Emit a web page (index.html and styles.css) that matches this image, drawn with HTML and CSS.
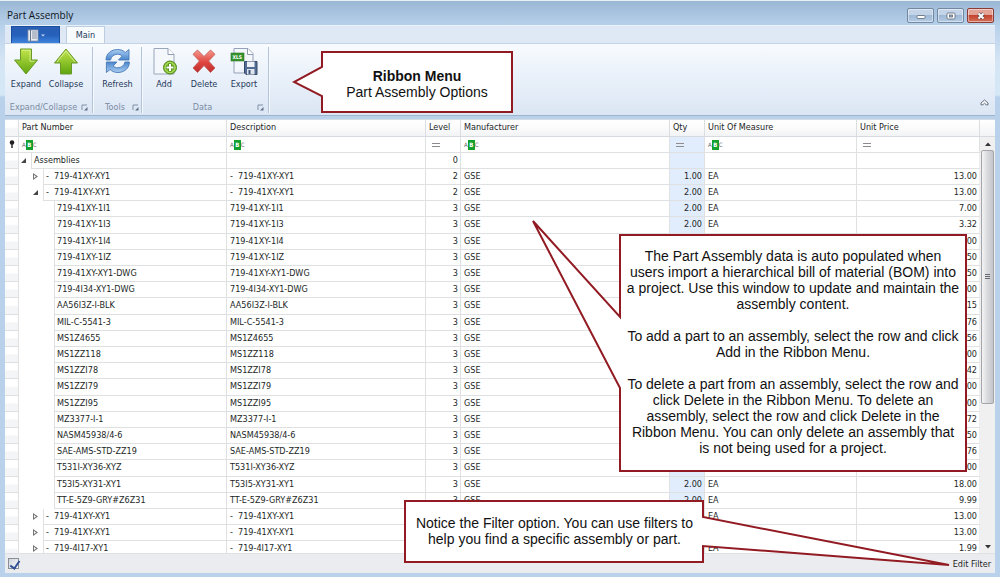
FILE: index.html
```html
<!DOCTYPE html>
<html lang="en">
<head>
<meta charset="utf-8">
<title>Part Assembly</title>
<link rel="stylesheet" href="styles.css">
</head>
<body>
<div class="window">
  <header class="titlebar">
    <h1 class="title">Part Assembly</h1>
    <div class="win-controls">
      <button class="win-btn" aria-label="Minimize"><svg width="10" height="8" viewBox="0 0 10 8"><rect x="1" y="3.5" width="8" height="3" rx="1" fill="#fff" stroke="#5b6675" stroke-width=".8"/></svg></button>
      <button class="win-btn" aria-label="Maximize"><svg width="10" height="8" viewBox="0 0 10 8"><rect x="1" y="1" width="8" height="6" rx="1" fill="#fff" stroke="#5b6675" stroke-width=".8"/><rect x="3.5" y="3" width="3" height="2" fill="#9cb2cc" stroke="#5b6675" stroke-width=".8"/></svg></button>
      <button class="win-btn close" aria-label="Close"><svg width="10" height="8" viewBox="0 0 10 8"><path d="M2.5 1.5l5 5M7.5 1.5l-5 5" stroke="#5c4a50" stroke-width="3.2"/><path d="M2.5 1.5l5 5M7.5 1.5l-5 5" stroke="#fff" stroke-width="2"/></svg></button>
    </div>
  </header>

  <nav class="tabs">
    <button class="app-menu" aria-label="Application menu">
      <svg width="18" height="13" viewBox="0 0 18 13"><rect x="1" y="1" width="10" height="11" fill="#e9edf2" stroke="#8593a8" stroke-width=".8"/><path d="M3.5 1v11" stroke="#66758c" stroke-width="1"/><path d="M5 3h5M5 5h5M5 7h5M5 9h5" stroke="#77849a" stroke-width=".9"/><path d="M14 5.5h4l-2 2z" fill="#c6d8f2"/></svg>
    </button>
    <button class="tab">Main</button>
  </nav>

  <section class="ribbon">
    <div class="group">
      <div class="tools">
        <button class="tool"><svg width="26" height="28" viewBox="0 0 26 28"><defs><linearGradient id="gr" x1="0" y1="0" x2="0" y2="1"><stop offset="0" stop-color="#c3e54b"/><stop offset="1" stop-color="#5fa50f"/></linearGradient></defs><path d="M7.500 2h11v11h6L13 27 1.500 13h6z" fill="url(#gr)" stroke="#68992a" stroke-linejoin="round"/><path d="M9 3.300h8v11h4.500" fill="none" stroke="#dcf29a" stroke-width=".8"/></svg>Expand</button>
        <button class="tool"><svg width="26" height="28" viewBox="0 0 26 28"><path d="M7.500 27h11V16h6L13 2 1.500 16h6z" fill="url(#gr)" stroke="#68992a" stroke-linejoin="round"/><path d="M4 15L13 4l9 11" fill="none" stroke="#e3f5a8" stroke-width=".8"/></svg>Collapse</button>
      </div>
      <div class="caption"><span>Expand/Collapse</span><svg class="launch" width="7" height="7" viewBox="0 0 7 7"><path d="M1 6V1h5" fill="none" stroke="#7f90a8"/><path d="M6.500 3v3.500H3z" fill="#60708a"/></svg></div>
    </div>
    <div class="group">
      <div class="tools">
        <button class="tool"><svg width="28" height="28" viewBox="0 0 28 28"><defs><linearGradient id="bl" x1="0" y1="0" x2="0" y2="1"><stop offset="0" stop-color="#a9cdf2"/><stop offset="1" stop-color="#4a86cc"/></linearGradient></defs><path id="arc" d="M2 13C2 6.500 7.500 2.500 13.500 2.500c3.500 0 6 1.200 7.800 3L25 2.500V13H14.500l3.700-4c-1.200-1.100-2.800-1.800-4.700-1.800C10 7.200 7 9.500 6.500 13z" fill="url(#bl)" stroke="#4679b5" stroke-width=".9" stroke-linejoin="round"/><use href="#arc" transform="rotate(180 13.700 14)"/></svg>Refresh</button>
      </div>
      <div class="caption"><span>Tools</span><svg class="launch" width="7" height="7" viewBox="0 0 7 7"><path d="M1 6V1h5" fill="none" stroke="#7f90a8"/><path d="M6.500 3v3.500H3z" fill="#60708a"/></svg></div>
    </div>
    <div class="group">
      <div class="tools">
        <button class="tool"><svg width="28" height="28" viewBox="0 0 28 28"><path d="M4 1.500h14l6 6V27H4z" fill="#f4f7fc" stroke="#9aa6ba"/><path d="M18 1.500v6h6" fill="#fff" stroke="#8e9ab0"/><circle cx="20" cy="20.500" r="6.500" fill="#84c32c" stroke="#4d8518"/><circle cx="20" cy="20.500" r="5" fill="none" stroke="#c8e78f" stroke-width=".7"/><path d="M20 16.500v8M16 20.500h8" stroke="#4d8518" stroke-width="3.400"/><path d="M20 17v7M16.500 20.500h7" stroke="#fff" stroke-width="2"/></svg>Add</button>
        <button class="tool"><svg width="26" height="28" viewBox="0 0 26 28"><defs><linearGradient id="rd" x1="0" y1="0" x2="0" y2="1"><stop offset="0" stop-color="#f59a8d"/><stop offset=".55" stop-color="#df4540"/><stop offset="1" stop-color="#bd2d2e"/></linearGradient></defs><path d="M6.500 3L13 9.500 19.500 3 24 7.300 17.600 14 24 21l-4.500 4.500L13 18.600 6.500 25.500 2 21l6.400-7L2 7.300z" fill="url(#rd)" stroke="#c2605c" stroke-width=".9" stroke-linejoin="round"/></svg>Delete</button>
        <button class="tool"><svg width="28" height="28" viewBox="0 0 28 28"><path d="M4 26V1.500h14l5 5V15" fill="#f4f7fc" stroke="#95a1b6"/><path d="M4 26h10" stroke="#95a1b6"/><path d="M17.500 1.500v6H23" fill="#fff" stroke="#8e9ab0"/><rect x="1" y="6" width="13" height="8" fill="#37922f" stroke="#2b7a26" stroke-width=".6"/><text x="2.500" y="12.300" class="xls">XLS</text><path d="M14.500 14.500h12.500v13H16l-1.500-1.500z" fill="#526c93" stroke="#374a69"/><rect x="17" y="14.500" width="7.500" height="5.500" fill="#eef2f8"/><rect x="17" y="22" width="7.500" height="5.500" fill="#dfe5ee"/><rect x="18.500" y="23" width="2" height="4" fill="#3f557a"/></svg>Export</button>
      </div>
      <div class="caption"><span>Data</span><svg class="launch" width="7" height="7" viewBox="0 0 7 7"><path d="M1 6V1h5" fill="none" stroke="#7f90a8"/><path d="M6.500 3v3.500H3z" fill="#60708a"/></svg></div>
    </div>
    <button class="fold" aria-label="Collapse ribbon"><svg width="9" height="7" viewBox="0 0 9 7"><path d="M1 4l3.500-3L8 4v1.800H6.200L4.500 4.200 2.800 5.800H1z" fill="#fff" stroke="#4f5d72" stroke-width=".9"/></svg></button>
  </section>

  <main class="grid">
    <div class="grid-view">
      <table class="parts">
        <colgroup><col class="c-mark"><col class="c-part"><col class="c-desc"><col class="c-level"><col><col class="c-qty"><col class="c-uom"><col class="c-price"></colgroup>
        <thead>
          <tr><th></th><th>Part Number</th><th>Description</th><th>Level</th><th>Manufacturer</th><th>Qty</th><th>Unit Of Measure</th><th>Unit Price</th></tr>
          <tr class="filters"><td class="mark"><svg width="6" height="9" viewBox="0 0 6 9"><circle cx="3" cy="2.500" r="2.300" fill="#222"/><path d="M3 4v4" stroke="#222" stroke-width="1.400"/></svg></td><td><span class="abc">A<b>B</b>C</span></td><td><span class="abc">A<b>B</b>C</span></td><td><i class="eq"></i></td><td><span class="abc">A<b>B</b>C</span></td><td class="qty"><i class="eq"></i></td><td><span class="abc">A<b>B</b>C</span></td><td><i class="eq"></i></td></tr>
        </thead>
        <tbody>
          <tr class="l0 open"><td></td><td><div class="tree"><i></i><span>Assemblies</span></div></td><td></td><td>0</td><td></td><td></td><td></td><td></td></tr>
          <tr class="l1"><td></td><td><div class="tree"><i></i><span>-&nbsp; 719-41XY-XY1</span></div></td><td>-&nbsp; 719-41XY-XY1</td><td>2</td><td>GSE</td><td>1.00</td><td>EA</td><td>13.00</td></tr>
          <tr class="l1 open"><td></td><td><div class="tree"><i></i><span>-&nbsp; 719-41XY-XY1</span></div></td><td>-&nbsp; 719-41XY-XY1</td><td>2</td><td>GSE</td><td>2.00</td><td>EA</td><td>13.00</td></tr>
          <tr class="l2"><td></td><td><div class="tree"><i></i><span>719-41XY-1I1</span></div></td><td>719-41XY-1I1</td><td>3</td><td>GSE</td><td>2.00</td><td>EA</td><td>7.00</td></tr>
          <tr class="l2"><td></td><td><div class="tree"><i></i><span>719-41XY-1I3</span></div></td><td>719-41XY-1I3</td><td>3</td><td>GSE</td><td>2.00</td><td>EA</td><td>3.32</td></tr>
          <tr class="l2"><td></td><td><div class="tree"><i></i><span>719-41XY-1I4</span></div></td><td>719-41XY-1I4</td><td>3</td><td>GSE</td><td></td><td></td><td>00</td></tr>
          <tr class="l2"><td></td><td><div class="tree"><i></i><span>719-41XY-1IZ</span></div></td><td>719-41XY-1IZ</td><td>3</td><td>GSE</td><td></td><td></td><td>50</td></tr>
          <tr class="l2"><td></td><td><div class="tree"><i></i><span>719-41XY-XY1-DWG</span></div></td><td>719-41XY-XY1-DWG</td><td>3</td><td>GSE</td><td></td><td></td><td>50</td></tr>
          <tr class="l2"><td></td><td><div class="tree"><i></i><span>719-4I34-XY1-DWG</span></div></td><td>719-4I34-XY1-DWG</td><td>3</td><td>GSE</td><td></td><td></td><td>00</td></tr>
          <tr class="l2"><td></td><td><div class="tree"><i></i><span>AA56I3Z-I-BLK</span></div></td><td>AA56I3Z-I-BLK</td><td>3</td><td>GSE</td><td></td><td></td><td>15</td></tr>
          <tr class="l2"><td></td><td><div class="tree"><i></i><span>MIL-C-5541-3</span></div></td><td>MIL-C-5541-3</td><td>3</td><td>GSE</td><td></td><td></td><td>76</td></tr>
          <tr class="l2"><td></td><td><div class="tree"><i></i><span>MS1Z4655</span></div></td><td>MS1Z4655</td><td>3</td><td>GSE</td><td></td><td></td><td>56</td></tr>
          <tr class="l2"><td></td><td><div class="tree"><i></i><span>MS1ZZ118</span></div></td><td>MS1ZZ118</td><td>3</td><td>GSE</td><td></td><td></td><td>00</td></tr>
          <tr class="l2"><td></td><td><div class="tree"><i></i><span>MS1ZZI78</span></div></td><td>MS1ZZI78</td><td>3</td><td>GSE</td><td></td><td></td><td>42</td></tr>
          <tr class="l2"><td></td><td><div class="tree"><i></i><span>MS1ZZI79</span></div></td><td>MS1ZZI79</td><td>3</td><td>GSE</td><td></td><td></td><td>00</td></tr>
          <tr class="l2"><td></td><td><div class="tree"><i></i><span>MS1ZZI95</span></div></td><td>MS1ZZI95</td><td>3</td><td>GSE</td><td></td><td></td><td>00</td></tr>
          <tr class="l2"><td></td><td><div class="tree"><i></i><span>MZ3377-I-1</span></div></td><td>MZ3377-I-1</td><td>3</td><td>GSE</td><td></td><td></td><td>72</td></tr>
          <tr class="l2"><td></td><td><div class="tree"><i></i><span>NASM45938/4-6</span></div></td><td>NASM45938/4-6</td><td>3</td><td>GSE</td><td></td><td></td><td>50</td></tr>
          <tr class="l2"><td></td><td><div class="tree"><i></i><span>SAE-AMS-STD-ZZ19</span></div></td><td>SAE-AMS-STD-ZZ19</td><td>3</td><td>GSE</td><td></td><td></td><td>76</td></tr>
          <tr class="l2"><td></td><td><div class="tree"><i></i><span>T531I-XY36-XYZ</span></div></td><td>T531I-XY36-XYZ</td><td>3</td><td>GSE</td><td></td><td></td><td>00</td></tr>
          <tr class="l2"><td></td><td><div class="tree"><i></i><span>T53I5-XY31-XY1</span></div></td><td>T53I5-XY31-XY1</td><td>3</td><td>GSE</td><td>2.00</td><td>EA</td><td>18.00</td></tr>
          <tr class="l2"><td></td><td><div class="tree"><i></i><span>TT-E-5Z9-GRY#Z6Z31</span></div></td><td>TT-E-5Z9-GRY#Z6Z31</td><td>3</td><td>GSE</td><td>2.00</td><td>EA</td><td>9.99</td></tr>
          <tr class="l1"><td></td><td><div class="tree"><i></i><span>-&nbsp; 719-41XY-XY1</span></div></td><td>-&nbsp; 719-41XY-XY1</td><td></td><td></td><td></td><td>EA</td><td>13.00</td></tr>
          <tr class="l1"><td></td><td><div class="tree"><i></i><span>-&nbsp; 719-41XY-XY1</span></div></td><td>-&nbsp; 719-41XY-XY1</td><td></td><td></td><td></td><td></td><td>13.00</td></tr>
          <tr class="l1"><td></td><td><div class="tree"><i></i><span>-&nbsp; 719-4I17-XY1</span></div></td><td>-&nbsp; 719-4I17-XY1</td><td></td><td></td><td></td><td>EA</td><td>1.99</td></tr>
        </tbody>
      </table>
    </div>
    <div class="scroll">
      <div class="scroll-head"></div>
      <button class="arrow" aria-label="Scroll up"><svg width="6" height="4" viewBox="0 0 6 4"><path d="M0 4l3-3.500L6 4z" fill="#333"/></svg></button>
      <div class="track"><div class="thumb"><i></i><i></i><i></i></div></div>
      <button class="arrow" aria-label="Scroll down"><svg width="6" height="4" viewBox="0 0 6 4"><path d="M0 0l3 3.500L6 0z" fill="#333"/></svg></button>
    </div>
  </main>

  <footer class="filterbar">
    <input class="check" type="checkbox" checked aria-label="Enable filter">
    <button class="edit">Edit Filter</button>
  </footer>

  <aside class="callout ribbon-note">
    <svg width="221" height="62" viewBox="0 0 221 62"><path d="M30 1H220V61H30V45L2 31 30 16z"/></svg>
    <p><strong>Ribbon Menu</strong><br>Part Assembly Options</p>
  </aside>
  <aside class="callout data-note">
    <svg width="436" height="254" viewBox="0 0 436 254"><path d="M89 17H435V253H89V170L2 3 89 99z"/></svg>
    <div class="note-text">
      <p>The Part Assembly data is auto populated when<br>users import a hierarchical bill of material (BOM) into<br>a project. Use this window to update and maintain the<br>assembly content.</p>
      <p>To add a part to an assembly, select the row and click<br>Add in the Ribbon Menu.</p>
      <p>To delete a part from an assembly, select the row and<br>click Delete in the Ribbon Menu. To delete an<br>assembly, select the row and click Delete in the<br>Ribbon Menu. You can only delete an assembly that<br>is not being used for a project.</p>
    </div>
  </aside>
  <aside class="callout filter-note">
    <svg width="548" height="68" viewBox="0 0 548 68"><path d="M1 1H299V17L545 65 299 46V62H1z"/></svg>
    <p>Notice the Filter option. You can use filters to<br>help you find a specific assembly or part.</p>
  </aside>
</div>
</body>
</html>
```

FILE: styles.css
```css
* { box-sizing: border-box; }

body {
  margin: 0;
  font: 9px/12px "DejaVu Sans Condensed", "Noto Sans", sans-serif;
  color: #1c1f26;
}

button {
  padding: 0;
  border: 0;
  background: none;
  font: inherit;
  color: inherit;
}

/* Window frame */
.window {
  position: relative;
  display: flex;
  flex-direction: column;
  height: 100vh;
  padding: 0 5px 4px;
  overflow: hidden;
  border-top: 1px solid #e8eef4;
  background: linear-gradient(#9ab7d4 0, #b7d0ea 24px, #d5e5f5 60px, #d5e8f6 94px, #b9d1ea 96px);
}

.titlebar {
  display: flex;
  justify-content: space-between;
  height: 24px;
  padding: 7px 1px 0 2px;
  flex: none;
}

.title {
  margin: 0;
  font: 10px/14px "Open Sans", "Noto Sans", sans-serif;
  color: #10151c;
}

.win-controls { display: flex; gap: 3px; }

.win-btn {
  display: flex;
  align-items: center;
  justify-content: center;
  width: 27px;
  height: 15px;
  border: 1px solid #7288a3;
  border-radius: 2px;
  background: linear-gradient(#c3d4e8 45%, #9fb8d4 50%, #b3cbe5);
  box-shadow: inset 0 0 0 1px rgba(255, 255, 255, .45);
}

.win-btn.close {
  border-color: #8c3b37;
  background: linear-gradient(#e3a397 45%, #c4432e 50%, #d3715a);
}

/* Ribbon */
.tabs {
  display: flex;
  gap: 6px;
  height: 18px;
  padding-left: 6px;
  flex: none;
  background: #dfe9f5;
  border-top: 1px solid #e9f1f9;
}

.app-menu {
  display: flex;
  align-items: center;
  justify-content: center;
  width: 49px;
  border: 1px solid #1c4f9f;
  border-bottom: 0;
  background: linear-gradient(#2a5fb4, #2560bb 50%, #3f83dc);
}

.tab {
  width: 39px;
  border: 1px solid #bccde0;
  border-bottom: 0;
  background: #f8fbfe;
  color: #1e395b;
}

.ribbon {
  display: flex;
  height: 73px;
  flex: none;
  padding: 3px 0 2px;
  border-top: 1px solid #c4d3e5;
  border-bottom: 1px solid #9fb4cc;
  background: linear-gradient(#f8fbfe, #eaf1fa 45%, #dbe6f4);
  color: #1e395b;
}

.group {
  display: flex;
  flex-direction: column;
  justify-content: space-between;
  padding-left: 1px;
  border-right: 1px solid #b5c5d9;
  box-shadow: 1px 0 #f5f9fd;
}

.tools { display: flex; }

.tool {
  display: flex;
  flex-direction: column;
  align-items: center;
  width: 40px;
  gap: 3px;
}

.group:nth-child(1) { padding-right: 6px; }
.group:nth-child(2) .tool { width: 47px; }
.group:nth-child(3) { padding-left: 2px; padding-right: 4px; }

.caption {
  display: flex;
  align-items: center;
  padding: 0 2px 0 4px;
  color: #7b8ba3;
}

.caption span { flex: 1; text-align: center; }
.group:nth-child(1) .caption { padding: 0; margin-right: -2px; }
.group:nth-child(3) .caption { padding-right: 0; }

.xls { font: bold 5px/6px "DejaVu Sans Condensed", sans-serif; fill: #fff; }

.fold { margin: auto 6px 4px auto; }

/* Data grid */
.grid {
  display: flex;
  flex: 1;
  min-height: 0;
  margin-top: 3px;
  border-top: 1px solid #d3dbe4;
  background: #fff;
}

.grid-view { flex: 1; min-width: 0; overflow: hidden; }

.parts {
  width: 100%;
  table-layout: fixed;
  border-spacing: 0;
}

.c-mark { width: 14px; }
.c-part { width: 208px; }
.c-desc { width: 199px; }
.c-level { width: 35px; }
.c-qty { width: 35px; }
.c-uom { width: 152px; }
.c-price { width: 123px; }

.parts th {
  height: 17px;
  padding: 0 3px 2px;
  overflow: hidden;
  text-align: left;
  font-weight: normal;
  line-height: 12px;
  white-space: nowrap;
  border-right: 1px solid #dcdee2;
  border-bottom: 1px solid #d6d9de;
  background: linear-gradient(#fff, #fbfbfc 50%, #f2f3f5);
}

.parts td {
  height: 16px;
  padding: 0 3px;
  overflow: hidden;
  line-height: 15px;
  vertical-align: top;
  white-space: nowrap;
  border-right: 1px solid #dfe0e2;
  border-bottom: 1px solid #dfe0e2;
}

.parts th:first-child,
.parts tbody td:first-child {
  padding: 0;
  background: linear-gradient(#fff 45%, #f4f5f7 55%);
}

.parts tbody td:nth-child(2) { padding: 0; border-bottom: 0; }
.parts tbody td:nth-child(4),
.parts tbody td:nth-child(6),
.parts tbody td:nth-child(8) { padding-right: 2px; text-align: right; }
.parts tbody td:nth-child(8) { border-right-color: #eee; }
.parts tbody td:nth-child(6),
.parts .qty { background: #e1edfd; }

/* Every fifth row takes one extra pixel of the row pitch */
.parts tbody tr:nth-child(5n) td,
.parts tbody tr:nth-child(5n) .tree { height: 17px; }

.parts .filters td { vertical-align: middle; padding: 0 2px; }
.filters svg { display: block; margin: auto; }

.abc {
  display: flex;
  align-items: center;
  margin-left: 1px;
  font-size: 6px;
  line-height: 10px;
  color: #666;
}

.abc b {
  width: 7px;
  text-align: center;
  background: #14a02c;
  color: #fff;
}

.eq {
  display: block;
  width: 8px;
  height: 4px;
  margin-left: 4px;
  border: solid #8c8c8c;
  border-width: 1px 0;
}

.tree { display: flex; height: 16px; }

.tree span {
  flex: 1;
  padding-left: 2px;
  line-height: 15px;
  border-left: 1px solid #dfe0e2;
  border-bottom: 1px solid #dfe0e2;
}

.tree i { width: 12px; flex: none; }
.l1 .tree i { width: 24px; }
.l2 .tree i { width: 35px; }

.l0 .tree i::before,
.l1 .tree i::before {
  content: "";
  display: block;
  width: 5px;
  height: 7px;
  margin: 4px 5px 0 auto;
  background: #777;
  clip-path: polygon(0 0, 100% 50%, 0 100%, 0 0, 1px 2px, 1px 5px, 3px 50%, 1px 2px);
}

.open .tree i::before {
  height: 5px;
  margin-top: 5px;
  background: #444;
  clip-path: polygon(100% 0, 100% 100%, 0 100%);
}

/* Scroll bar */
.scroll {
  display: flex;
  flex-direction: column;
  width: 15px;
  background: #f0f0f1;
}

.scroll-head {
  height: 17px;
  border-bottom: 1px solid #d6d9de;
  background: linear-gradient(#fff, #f2f3f5);
}

.arrow { height: 13px; display: flex; align-items: center; justify-content: center; }
.track { flex: 1; padding: 0 1px; }

.thumb {
  display: flex;
  flex-direction: column;
  align-items: center;
  justify-content: center;
  gap: 1px;
  height: 65%;
  border: 1px solid #a3a5aa;
  border-radius: 2px;
  background: linear-gradient(90deg, #f4f4f5, #d9dadd 50%, #c3c5ca);
}

.thumb i { width: 5px; height: 1px; background: #666a72; }

/* Filter bar */
.filterbar {
  display: flex;
  align-items: center;
  justify-content: space-between;
  height: 20px;
  flex: none;
  padding: 0 4px 0 3px;
  background: #ebecef;
  border-top: 1px solid #e0e1e4;
}

.check {
  appearance: none;
  width: 11px;
  height: 11px;
  margin: 0;
  border: 1px solid #8a8e95;
  background: linear-gradient(135deg, #cfd4dc, #fafbfc);
}

.check:checked::after {
  content: "";
  display: block;
  width: 4px;
  height: 8px;
  margin: 0 0 0 3px;
  border: solid #2f4f97;
  border-width: 0 2px 2px 0;
  transform: rotate(35deg);
}

/* Callouts laid over the window */
.callout {
  position: absolute;
  font: 14px/16px "Liberation Sans", Arial, sans-serif;
  color: #111;
  text-align: center;
  white-space: nowrap;
}

.callout svg { display: block; }
.callout path { fill: #fff; stroke: #921a22; stroke-width: 2; stroke-linejoin: miter; stroke-miterlimit: 3; }
.callout p { margin: 0 0 16px; }

.ribbon-note { left: 292px; top: 50px; }
.ribbon-note p { position: absolute; inset: 17px 1px auto 30px; }
.data-note { left: 531px; top: 217px; }
.note-text { position: absolute; inset: 30px 1px auto 89px; }
.filter-note { left: 404px; top: 499px; }
.filter-note p { position: absolute; inset: 15px 248px auto 1px; }
```
